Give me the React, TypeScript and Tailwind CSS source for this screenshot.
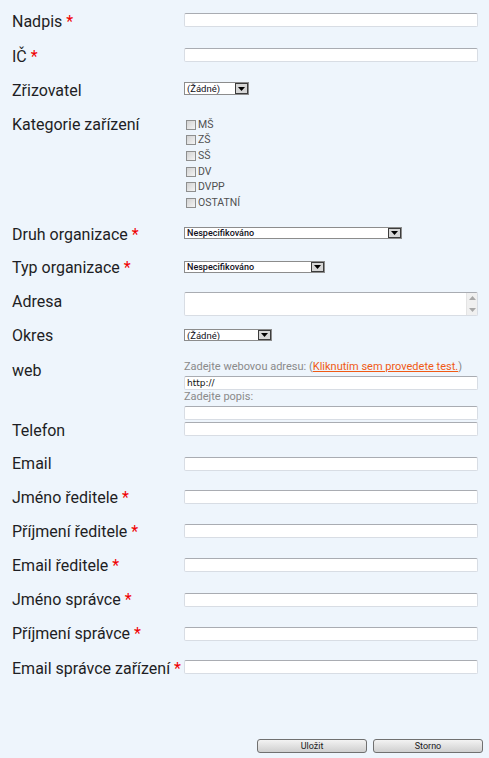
import React from 'react';

const Star = () => <span className="text-[#f00000]"> *</span>;

function Row({
    label,
    required,
    h,
    pt,
    children,
}: {
    label: string;
    required?: boolean;
    h: string;
    pt: string;
    children: React.ReactNode;
}) {
    return (
        <div className={`flex ${h}`}>
            <div className="w-[184px] shrink-0 pl-3 text-[16px] leading-[20px] text-[#1e1e24] whitespace-nowrap">
                {label}
                {required && <Star />}
            </div>
            <div className={`flex-1 mr-[11px] min-w-0 ${pt}`}>{children}</div>
        </div>
    );
}

const TextBox = ({ value }: { value?: string }) => (
    <div className="h-[14px] w-full bg-white border border-[#d8dde4] border-t-[#a9acb2] rounded-[2px] text-[9px] leading-[12px] pl-[2px] text-[#111] font-['DejaVu_Sans',sans-serif]">
        {value}
    </div>
);

function Select({ text, w, h, bold }: { text: string; w: string; h: string; bold?: boolean }) {
    return (
        <div className={`flex bg-white border border-[#8c8c8c] ${w} ${h}`}>
            <div
                className={`flex-1 pl-[2px] text-[#101020] whitespace-nowrap overflow-hidden ${
                    bold ? 'text-[9px] leading-[10px] font-medium' : 'text-[9.5px] leading-[11px]'
                }`}
            >
                {text}
            </div>
            <div className="w-[13px] h-full border border-[#3c3c3c] bg-[#d6d6d6] flex items-center justify-center">
                <svg width="7" height="4" viewBox="0 0 7 4">
                    <path d="M0 0h7L3.5 4z" fill="#000" />
                </svg>
            </div>
        </div>
    );
}

const Check = ({ label }: { label: string }) => (
    <div className="flex items-center h-[15.6px] pl-[2px]">
        <div className="w-[10px] h-[10px] border border-[#8e8f8f] bg-linear-to-br from-[#d2d2d2] to-[#f4f4f4]" />
        <span className="ml-[2px] text-[10.5px] leading-[12px] text-[#505050]">{label}</span>
    </div>
);

const Button = ({ label }: { label: string }) => (
    <button className="w-[110px] h-[14px] rounded-[3px] border border-[#707070] bg-linear-to-b from-[#f3f3f3] to-[#cfcfcf] text-[9px] leading-[12px] text-[#1a1a1a]">
        {label}
    </button>
);

export default function App() {
    return (
        <div className="h-[758px] w-full bg-[#eef5fc] flex flex-col font-['Roboto',sans-serif] overflow-hidden">
            <div className="pt-[12px]">
                <Row label="Nadpis" required h="h-[35px]" pt="pt-[1px]">
                    <TextBox />
                </Row>
                <Row label="IČ" required h="h-[34px]" pt="pt-[1px]">
                    <TextBox />
                </Row>
                <Row label="Zřizovatel" h="h-[34px]" pt="pt-[1px]">
                    <Select text="(Žádné)" w="w-[65px]" h="h-[13px]" />
                </Row>
                <Row label="Kategorie zařízení" h="h-[110px]" pt="pt-[2px]">
                    {['MŠ', 'ZŠ', 'SŠ', 'DV', 'DVPP', 'OSTATNÍ'].map((c) => (
                        <Check key={c} label={c} />
                    ))}
                </Row>
                <Row label="Druh organizace" required h="h-[33px]" pt="pt-[2px]">
                    <Select text="Nespecifikováno" w="w-[218px]" h="h-[12px]" bold />
                </Row>
                <Row label="Typ organizace" required h="h-[34px]" pt="pt-[3px]">
                    <Select text="Nespecifikováno" w="w-[141px]" h="h-[12px]" bold />
                </Row>
                <Row label="Adresa" h="h-[34px]" pt="pt-0">
                    <div className="flex h-[24px] w-full bg-white border border-[#d8dde4] border-t-[#a9acb2] rounded-[2px]">
                        <div className="flex-1" />
                        <div className="w-[11px] h-full bg-[#f0f0f0] border-l border-[#e4e4e4] flex flex-col items-center justify-between py-[3px]">
                            <svg width="7" height="4" viewBox="0 0 7 4">
                                <path d="M3.5 0L7 4H0z" fill="#a8a8a8" />
                            </svg>
                            <svg width="7" height="4" viewBox="0 0 7 4">
                                <path d="M0 0h7L3.5 4z" fill="#a8a8a8" />
                            </svg>
                        </div>
                    </div>
                </Row>
                <Row label="Okres" h="h-[35px]" pt="pt-[3px]">
                    <Select text="(Žádné)" w="w-[88px]" h="h-[12px]" />
                </Row>
                <Row label="web" h="h-[60px]" pt="pt-0">
                    <div className="h-[15px] text-[11px] leading-[12px] text-[#8a8a8a] whitespace-nowrap">
                        Zadejte webovou adresu: (
                        <span className="text-[#f05a14] underline">Kliknutím sem provedete test.</span>)
                    </div>
                    <TextBox value="http://" />
                    <div className="h-[16px] pt-[1px] text-[11px] leading-[12px] text-[#8a8a8a]">Zadejte popis:</div>
                    <TextBox />
                </Row>
                <Row label="Telefon" h="h-[33px]" pt="pt-[1px]">
                    <TextBox />
                </Row>
                <Row label="Email" h="h-[34px]" pt="pt-[3px]">
                    <TextBox />
                </Row>
                <Row label="Jméno ředitele" required h="h-[34px]" pt="pt-[2px]">
                    <TextBox />
                </Row>
                <Row label="Příjmení ředitele" required h="h-[34px]" pt="pt-[2px]">
                    <TextBox />
                </Row>
                <Row label="Email ředitele" required h="h-[34px]" pt="pt-[2px]">
                    <TextBox />
                </Row>
                <Row label="Jméno správce" required h="h-[34px]" pt="pt-[3px]">
                    <TextBox />
                </Row>
                <Row label="Příjmení správce" required h="h-[35px]" pt="pt-[3px]">
                    <TextBox />
                </Row>
                <Row label="Email správce zařízení" required h="h-[34px]" pt="pt-[1px]">
                    <TextBox />
                </Row>
            </div>
            <div className="flex-1" />
            <div className="flex justify-end gap-[6px] pr-[6px] pb-[5px]">
                <Button label="Uložit" />
                <Button label="Storno" />
            </div>
        </div>
    );
}
